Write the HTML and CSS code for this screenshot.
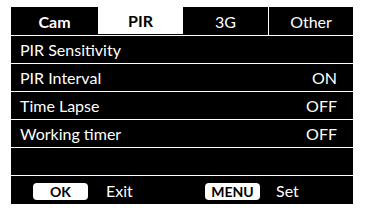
FILE: index.html
```html
<!DOCTYPE html>
<html>
<head>
<meta charset="utf-8">
<link rel="stylesheet" href="styles.css">
</head>
<body>
<div class="panel">
  <div class="tabs">
    <div class="tab bold">Cam</div>
    <div class="tab active">PIR</div>
    <div class="tab">3G</div>
    <div class="tab sep">Other</div>
  </div>
  <div class="row"><span>PIR Sensitivity</span></div>
  <div class="row"><span>PIR Interval</span><span>ON</span></div>
  <div class="row"><span>Time Lapse</span><span>OFF</span></div>
  <div class="row"><span>Working timer</span><span>OFF</span></div>
  <div class="row"></div>
  <div class="footer">
    <div class="fcell btncell"><span class="btn">OK</span></div>
    <div class="fcell label">Exit</div>
    <div class="fcell btncell"><span class="btn">MENU</span></div>
    <div class="fcell label">Set</div>
  </div>
</div>
</body>
</html>
```

FILE: styles.css
```css
html, body {
  margin: 0;
  padding: 0;
  background: #fff;
}
.panel {
  margin: 7px 0 0 11px;
  width: 342px;
  height: 197px;
  background: #000;
  color: #fff;
  font-family: "Lato", "Open Sans", sans-serif;
  font-size: 16px;
  display: flex;
  flex-direction: column;
}
.tabs {
  display: grid;
  grid-template-columns: 87px 85px 85px 85px;
  height: 28px;
  border-bottom: 1px solid #fff;
}
.tab {
  display: flex;
  align-items: center;
  justify-content: center;
}
.tab.bold {
  font-weight: bold;
}
.tab.active {
  background: #fff;
  color: #000;
  font-weight: bold;
  margin-bottom: 1px;
}
.tab.sep {
  border-left: 1px solid #fff;
}
.row {
  height: 27px;
  border-bottom: 1px solid #fff;
  display: flex;
  align-items: center;
  justify-content: space-between;
  padding: 0 16px 0 9px;
}
.footer {
  flex: 1;
  display: grid;
  grid-template-columns: 87px 85px 85px 85px;
  align-items: center;
}
.btncell {
  padding-left: 22px;
}
.label {
  padding-left: 8px;
}
.btn {
  display: inline-flex;
  align-items: center;
  justify-content: center;
  width: 55px;
  height: 17px;
  background: #fff;
  color: #000;
  border-radius: 4px;
  font-weight: bold;
  font-size: 14px;
}
```
